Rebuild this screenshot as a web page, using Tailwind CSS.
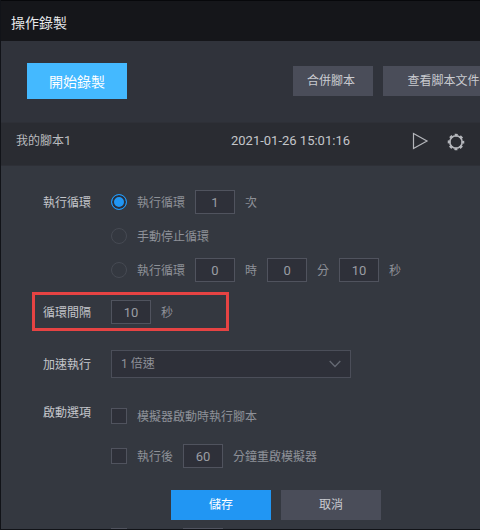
<!DOCTYPE html>
<html lang="zh-Hant">
<head>
<meta charset="utf-8">
<meta name="viewport" content="width=device-width, initial-scale=1">
<title>操作錄製</title>
<script src="https://cdn.jsdelivr.net/npm/@tailwindcss/browser@4"></script>
</head>
<body class="bg-[#343840] font-['Noto_Sans_CJK_TC','Noto_Sans_CJK_SC',sans-serif] text-xs text-[#8e9198]">
<div class="flex h-screen flex-col overflow-hidden border-b border-l border-[#111318]">
  <header class="flex h-[41px] shrink-0 items-center border-t border-[#07080b] bg-[#15161a] px-[10px] pt-0.5">
    <h1 class="text-sm leading-5 text-[#e8e9eb]">操作錄製</h1>
  </header>

  <div class="flex h-[81px] shrink-0 items-center bg-[#30333b] pb-0.5 pl-[26px]">
    <button type="button" class="h-9 w-[100px] shrink-0 bg-[#44b9ff] text-sm text-white">開始錄製</button>
    <div class="-mr-6 ml-auto flex gap-[10px]">
      <button type="button" class="h-[30px] w-20 bg-[#4a4d59] pr-1 pb-0.5 text-[#c9cbd0]">合併腳本</button>
      <button type="button" class="h-[30px] w-[121px] shrink-0 bg-[#4a4d59] pb-0.5 text-[#c9cbd0]">查看脚本文件</button>
    </div>
  </div>

  <div class="flex h-11 shrink-0 items-center border-y border-[#2e3037] bg-[#2a2c32] pr-[14px] pb-1 pl-[15px] text-[#b9bbbf]">
    <span class="flex-1 pb-0.5">我的腳本<span class="font-[Roboto,sans-serif] text-[13px]">1</span></span>
    <time datetime="2021-01-26T15:01:16" class="pb-0.5 font-[Roboto,sans-serif] text-[13px] text-[#c4c6ca]">2021-01-26 15:01:16</time>
    <div class="ml-[60px] flex items-center gap-4">
      <button type="button" aria-label="播放" class="size-5">
        <svg class="size-5" viewBox="0 0 20 20" fill="none" stroke="#b4b6bb" stroke-width="1.2"><path d="M3.500 1.500v15L17 9z"/></svg>
      </button>
      <button type="button" aria-label="設定" class="size-5">
        <svg class="size-5" viewBox="0 0 20 20" fill="none" stroke="#b4b6bb"><circle cx="10" cy="10" r="6.200" stroke-width="1.600"/><circle cx="10" cy="10" r="6.900" stroke-width="2.800" stroke-dasharray="2.800 2.619" stroke-dashoffset="1.400"/></svg>
      </button>
    </div>
  </div>

  <form class="flex min-h-0 flex-1 flex-col px-[31px] pt-6">
    <fieldset class="flex pl-[11px]">
      <legend class="float-left w-[68px] leading-6 text-[#c3c5ca]">執行循環</legend>
      <div class="flex flex-col gap-[10px]">
        <div class="flex h-6 items-center gap-[10px]">
          <input id="count" name="loop" type="radio" checked class="size-4 appearance-none rounded-full border border-[#515560] checked:border-[#2196f3] checked:bg-[#2196f3] checked:shadow-[inset_0_0_0_2px_#2b2f3a]">
          <label for="count">執行循環</label>
          <input type="text" value="1" aria-label="循環次數" class="h-6 w-10 border border-[#50535e] bg-[#2e3039] text-center font-[Roboto,sans-serif] text-[13px] text-[#9a9da3]">
          <span>次</span>
        </div>
        <div class="flex h-6 items-center gap-[10px]">
          <input id="manual" name="loop" type="radio" class="size-4 appearance-none rounded-full border border-[#464a53] checked:bg-[#2196f3]">
          <label for="manual">手動停止循環</label>
        </div>
        <div class="flex h-6 items-center gap-[10px]">
          <input id="timed" name="loop" type="radio" class="size-4 appearance-none rounded-full border border-[#464a53] checked:bg-[#2196f3]">
          <label for="timed">執行循環</label>
          <input type="text" value="0" aria-label="時" class="h-6 w-10 border border-[#50535e] bg-[#2e3039] text-center font-[Roboto,sans-serif] text-[13px] text-[#9a9da3]">
          <span>時</span>
          <input type="text" value="0" aria-label="分" class="h-6 w-10 border border-[#50535e] bg-[#2e3039] text-center font-[Roboto,sans-serif] text-[13px] text-[#9a9da3]">
          <span>分</span>
          <input type="text" value="10" aria-label="秒" class="h-6 w-10 border border-[#50535e] bg-[#2e3039] text-center font-[Roboto,sans-serif] text-[13px] text-[#9a9da3]">
          <span>秒</span>
        </div>
      </div>
    </fieldset>

    <div class="mt-[10px] flex w-[197px] items-center border-3 border-[#e64343] pt-[5px] pb-1 pl-2">
      <label for="interval" class="w-[68px] text-[#c3c5ca]">循環間隔</label>
      <input id="interval" type="text" value="10" class="h-6 w-10 border border-[#50535e] bg-[#2e3039] text-center font-[Roboto,sans-serif] text-[13px] text-[#9a9da3]">
      <span class="ml-[10px]">秒</span>
    </div>

    <div class="mt-[19px] flex items-center pl-[11px]">
      <label for="speed" class="w-[68px] text-[#c3c5ca]">加速執行</label>
      <div class="grid w-60 items-center">
        <select id="speed" class="col-start-1 row-start-1 h-7 appearance-none border border-[#4b4e59] bg-[#2e3039] px-[9px] font-[Roboto,'Noto_Sans_CJK_TC',sans-serif]">
          <option>1 倍速</option>
        </select>
        <svg class="pointer-events-none col-start-1 row-start-1 mr-[10px] h-2 w-3 justify-self-end" viewBox="0 0 12 8" fill="none" stroke="#656973" stroke-width="1.300"><path d="M.7 1 6 6.500 11.300 1"/></svg>
      </div>
    </div>

    <fieldset class="mt-[26px] flex pl-[11px]">
      <legend class="float-left w-[68px] leading-4 text-[#c3c5ca]">啟動選項</legend>
      <div class="flex flex-col gap-4">
        <div class="flex h-6 items-center gap-[10px]">
          <input id="onstart" type="checkbox" class="size-4 appearance-none border border-[#50535e] bg-[#2e3039] checked:bg-[#2196f3]">
          <label for="onstart">模擬器啟動時執行腳本</label>
        </div>
        <div class="flex h-6 items-center gap-[10px]">
          <input id="restart" type="checkbox" class="size-4 appearance-none border border-[#50535e] bg-[#2e3039] checked:bg-[#2196f3]">
          <label for="restart">執行後</label>
          <input type="text" value="60" aria-label="分鐘" class="h-6 w-10 border border-[#50535e] bg-[#2e3039] text-center font-[Roboto,sans-serif] text-[13px] text-[#9a9da3]">
          <span>分鐘重啟模擬器</span>
        </div>
      </div>
    </fieldset>

    <div class="mt-[22px] flex gap-[10px] pl-[139px]">
      <button type="submit" class="h-[30px] w-[100px] bg-[#2196f3] pb-0.5 text-white">儲存</button>
      <button type="button" class="h-[30px] w-[100px] bg-[#4a4d59] pb-0.5 text-[#c9cbd0]">取消</button>
    </div>

    <!-- top edge of the row that continues below the window -->
    <div aria-hidden="true" class="mt-2 flex gap-14 pl-[79px]">
      <div class="h-px w-4 bg-[#50535e]"></div>
      <div class="h-px w-10 bg-[#50535e]"></div>
    </div>
  </form>
</div>
</body>
</html>
